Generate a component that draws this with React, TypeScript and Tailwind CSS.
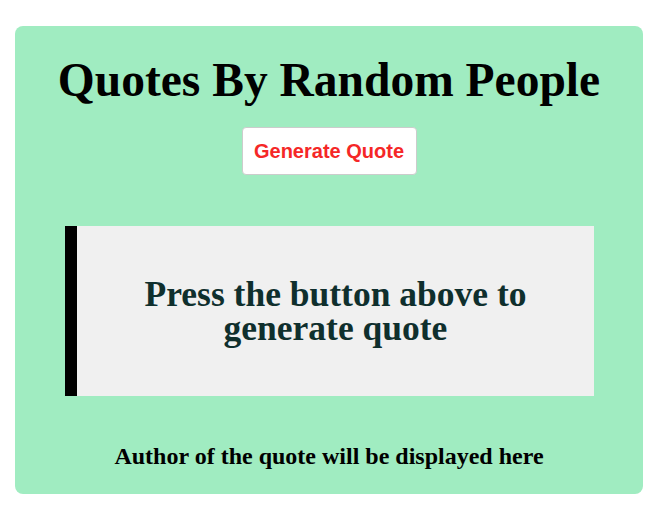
import React from "react";

const App = () => {
    return (
        <div className="min-h-screen bg-white pt-[26px] pl-[15px]">
            <div className="bg-[#a0ecc1] rounded-lg w-[628px] h-[468px] flex flex-col items-center pt-[28px] font-['Liberation_Serif',serif]">
                <h1 className="text-[47.5px] font-bold leading-[52px] text-black">
                    Quotes By Random People
                </h1>
                <button className="mt-[21px] w-[175px] h-[48px] bg-white border border-[#cccccc] rounded text-[#f52727] text-[20px] font-bold font-['Liberation_Sans',Arial,sans-serif]">
                    Generate Quote
                </button>
                <div className="mt-[51px] w-[529px] h-[170px] self-start ml-[50px] bg-[#f0f0f0] border-l-[12px] border-black flex items-center justify-center px-8">
                    <p className="text-[35.5px] font-bold leading-[34px] text-center text-[#0f2f2d]">
                        Press the button above to generate quote
                    </p>
                </div>
                <p className="mt-[42px] text-[24px] font-bold text-black">
                    Author of the quote will be displayed here
                </p>
            </div>
        </div>
    );
};

export default App;
